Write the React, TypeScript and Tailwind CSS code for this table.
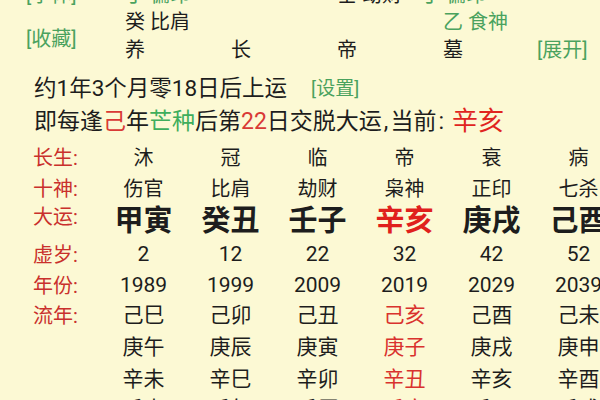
const FONT = "font-['Roboto','Noto_Sans_CJK_SC',sans-serif]";

const changSheng = ["沐", "冠", "临", "帝", "衰", "病"];
const shiShen = ["伤官", "比肩", "劫财", "枭神", "正印", "七杀"];
const daYun = ["甲寅", "癸丑", "壬子", "辛亥", "庚戌", "己酉"];
const xuSui = ["2", "12", "22", "32", "42", "52"];
const years = ["1989", "1999", "2009", "2019", "2029", "2039"];
const liuNian = [
  ["己巳", "己卯", "己丑", "己亥", "己酉", "己未"],
  ["庚午", "庚辰", "庚寅", "庚子", "庚戌", "庚申"],
  ["辛未", "辛巳", "辛卯", "辛丑", "辛亥", "辛酉"],
  ["壬申", "壬午", "壬辰", "壬寅", "壬子", "壬戌"],
];
const CURRENT = 3;

const Cells = ({ items, className = "", highlight = "" }: { items: string[]; className?: string; highlight?: string }) => (
  <div className="grid grid-cols-[repeat(6,87px)] shrink-0">
    {items.map((t, i) => (
      <div key={i} className={`text-center ${className} ${i === CURRENT && highlight ? highlight : ""}`}>
        {t}
      </div>
    ))}
  </div>
);

const Row = ({ label, height, children, labelClass = "" }: { label?: string; height: string; children: React.ReactNode; labelClass?: string }) => (
  <div className={`flex items-center ${height}`}>
    <div className={`w-[100px] shrink-0 pl-[33px] text-[20px] leading-none text-[#c9302c] ${labelClass}`}>{label}</div>
    {children}
  </div>
);

export default function App() {
  return (
    <div className={`w-[600px] h-[400px] overflow-hidden bg-[#fcf9d4] text-[#1d1d1d] ${FONT}`}>
      {/* 藏干 / 星运 */}
      <div className="flex mt-[-19px] text-[20px] leading-none">
        <div className="w-[125px] shrink-0 pl-[26px] mt-[-8px] flex flex-col text-[#4aa25e]">
          <div className="h-[44px] flex items-center">[字体]</div>
          <div className="h-[44px] flex items-center">[收藏]</div>
        </div>
        <div className="flex flex-col">
          <div className="h-[27px] grid grid-cols-[106px_106px_106px_94px] items-center">
            <div className="text-[#4aa25e]">丁 偏印</div>
            <div></div>
            <div>壬 劫财</div>
            <div className="text-[#4aa25e] ml-[-22px]">丁 偏印</div>
          </div>
          <div className="h-[28px] grid grid-cols-[106px_106px_106px_94px] items-center">
            <div>癸 比肩</div>
            <div></div>
            <div></div>
            <div className="text-[#4aa25e]">乙 食神</div>
          </div>
          <div className="h-[27px] flex items-center">
            <div className="grid grid-cols-[106px_106px_106px_94px]">
              <div>养</div>
              <div>长</div>
              <div>帝</div>
              <div>墓</div>
            </div>
            <div className="text-[#4aa25e]">[展开]</div>
          </div>
        </div>
      </div>

      {/* 起运 */}
      <div className="pl-[34px] mt-[10px]">
        <div className="h-[30px] flex items-center text-[22.5px] leading-none">
          约1年3个月零18日后上运
          <span className="ml-[24px] text-[19px] text-[#4aa25e]">[设置]</span>
        </div>
        <div className="h-[36px] flex items-center text-[23px] leading-none whitespace-nowrap">
          即每逢<span className="text-[#d93a36]">己</span>年<span className="text-[#3fae5c]">芒种</span>后第
          <span className="text-[#d93a36]">22</span>日交脱大运<span className="mx-[2px]">,</span>当前<span className="ml-[2px]">:</span>
          <span className="ml-[8px] text-[26px] text-[#e0241f]">辛亥</span>
        </div>
      </div>

      {/* 大运表 */}
      <div className="mt-[4px]">
        <Row label="长生:" height="h-[30px]">
          <Cells items={changSheng} className="text-[20px] leading-none" />
        </Row>
        <Row label="十神:" height="h-[31px]">
          <Cells items={shiShen} className="text-[20px] leading-none" />
        </Row>
        <Row label="大运:" height="h-[34px]" labelClass="mb-[8px]">
          <Cells items={daYun} className="text-[29px] font-bold leading-none" highlight="text-[#e0201c]" />
        </Row>
        <Row label="虚岁:" height="h-[33px]">
          <Cells items={xuSui} className="text-[21px] leading-none" />
        </Row>
        <Row label="年份:" height="h-[29px]">
          <Cells items={years} className="text-[21px] leading-none" />
        </Row>
        {liuNian.map((r, i) => (
          <Row key={i} label={i === 0 ? "流年:" : ""} height={i === 0 ? "h-[31px]" : i === 1 ? "h-[33px]" : "h-[30px]"}>
            <Cells items={r} className="text-[21px] leading-none" highlight="text-[#d9322e]" />
          </Row>
        ))}
      </div>
    </div>
  );
}
